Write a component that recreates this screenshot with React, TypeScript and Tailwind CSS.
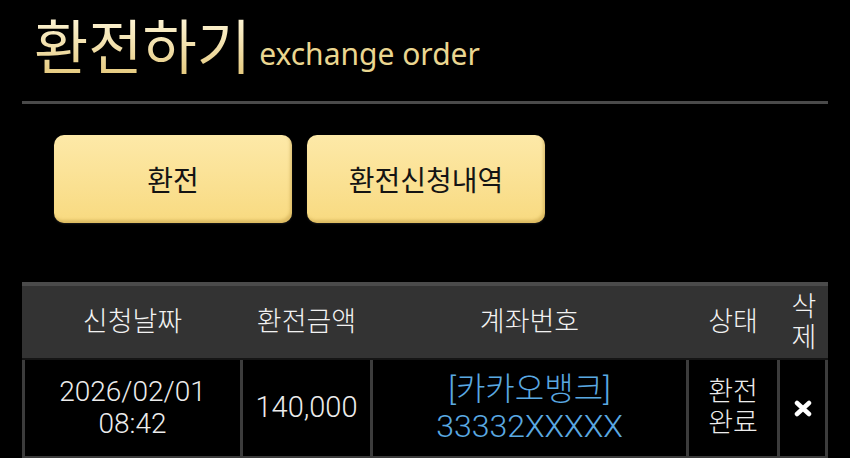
import React from "react";

const KR = "font-['Roboto','Noto_Sans_CJK_KR',sans-serif]";

export default function App() {
  return (
    <div className={`w-[850px] h-[458px] overflow-hidden bg-black px-[22px] ${KR}`}>
      {/* Title */}
      <div className="h-[101px] flex items-end pt-[14px] pb-[27px] pl-[12px]">
        <span className="text-[59px] leading-[60px] bg-gradient-to-b from-[#fff7da] to-[#e6cb80] bg-clip-text text-transparent font-['Noto_Sans_CJK_KR',sans-serif]">
          환전하기
        </span>
        <span className="ml-[8px] mb-[5px] text-[30px] leading-[30px] text-[#ead690] font-['Noto_Sans',sans-serif]">
          exchange order
        </span>
      </div>
      <div className="h-[3px] bg-[#4a4a4a]" />

      {/* Buttons */}
      <div className="flex gap-[15px] pl-[32px] pt-[31px]">
        <button className="w-[238px] h-[88px] rounded-[10px] bg-gradient-to-b from-[#fde9a8] to-[#f8da80] shadow-[inset_-2px_-3px_3px_rgba(170,130,40,0.35),0_1px_2px_rgba(255,255,255,0.1)] text-[28px] text-[#141414] font-['Noto_Sans_CJK_KR',sans-serif]">
          환전
        </button>
        <button className="w-[238px] h-[88px] rounded-[10px] bg-gradient-to-b from-[#fde9a8] to-[#f8da80] shadow-[inset_-2px_-3px_3px_rgba(170,130,40,0.35),0_1px_2px_rgba(255,255,255,0.1)] text-[28px] text-[#141414] font-['Noto_Sans_CJK_KR',sans-serif]">
          환전신청내역
        </button>
      </div>

      {/* Table */}
      <div className="mt-[59px] w-[806px]">
        <div className="flex h-[76px] bg-[#333333] border-t-[4px] border-[#4b4b4b] text-[27px] font-light text-[#f2f2f2]">
          <div className="w-[218px] pl-[3px] flex items-center justify-center">신청날짜</div>
          <div className="w-[130px] pl-[3px] flex items-center justify-center">환전금액</div>
          <div className="w-[316px] pl-[3px] flex items-center justify-center">계좌번호</div>
          <div className="w-[91px] pl-[3px] flex items-center justify-center">상태</div>
          <div className="w-[51px] pl-[3px] flex flex-col items-center justify-center leading-[31px] pt-[2px]">
            <span>삭</span>
            <span>제</span>
          </div>
        </div>
        <div className="h-[2px] bg-[#151515]" />
        <div className="flex h-[98px] text-[28px] font-light text-[#ececec] border-b-[2px] border-[#3c3c3c]">
          <div className="w-[218px] border-l-[3px] border-[#3c3c3c] flex flex-col items-center justify-center leading-[32px]">
            <span>2026/02/01</span>
            <span>08:42</span>
          </div>
          <div className="w-[130px] border-l-[3px] border-[#3c3c3c] flex items-center justify-center text-[29px]">
            140,000
          </div>
          <div className="w-[316px] border-l-[3px] border-[#3c3c3c] flex flex-col items-center justify-center leading-[37px] text-[32px] text-[#5aa9e2]">
            <span>[카카오뱅크]</span>
            <span>33332XXXXX</span>
          </div>
          <div className="w-[91px] border-l-[3px] border-[#3c3c3c] flex flex-col items-center justify-center leading-[31px] text-[27px]">
            <span>환전</span>
            <span>완료</span>
          </div>
          <div className="w-[51px] border-l-[3px] border-r-[3px] border-[#3c3c3c] flex items-center justify-center">
            <svg width="18" height="17" viewBox="0 0 18 17">
              <path d="M3 3 L15 14 M15 3 L3 14" stroke="#ffffff" strokeWidth="4.5" strokeLinecap="round" />
            </svg>
          </div>
        </div>
      </div>
    </div>
  );
}
